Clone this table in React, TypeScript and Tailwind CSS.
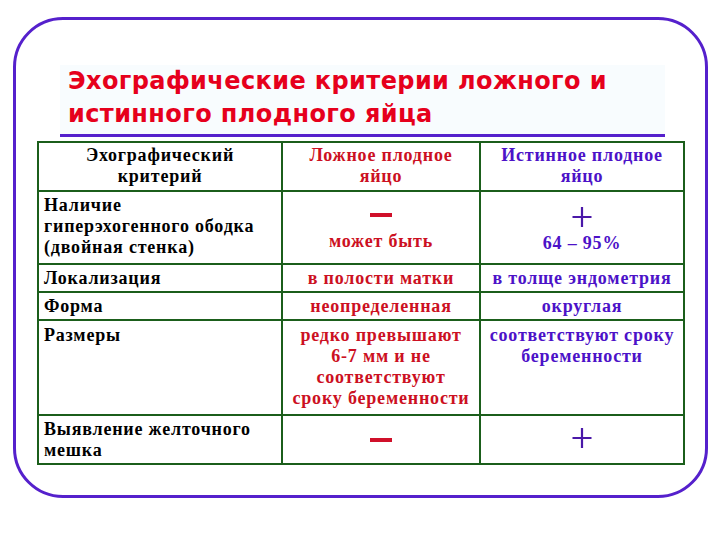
import React from 'react';

function Minus() {
  return <div className="mx-auto h-[4px] w-[22px] bg-[#d0102a]" />;
}

function Plus() {
  return (
    <svg width="22" height="20" viewBox="0 0 22 20" className="mx-auto block">
      <path d="M11 0 V20 M1.5 10 H20.5" stroke="#4a18a8" strokeWidth="2.2" />
    </svg>
  );
}

const cell = 'bg-white px-[5px] whitespace-nowrap';
const plain = `${cell} text-black`;
const red = `${cell} text-[#cc1022] text-center`;
const blue = `${cell} text-[#4c12c8] text-center`;

export default function App() {
  return (
    <div className="w-[720px] h-[540px] bg-white pt-[17px] pl-[13px]">
      <div className="w-[695px] h-[481px] rounded-[50px] border-[3px] border-[#5520cc] flex flex-col">
        <div className="ml-[44px] mt-[45px] w-[605px] border-b-[3px] border-[#5520cc] bg-[#f8fcfe] pl-[8px] pb-[3px] text-[24px] leading-[33px] font-bold tracking-[0.4px] text-[#e6001c] font-['DejaVu_Sans',Verdana,sans-serif]">
          <div>Эхографические критерии ложного и</div>
          <div>истинного плодного яйца</div>
        </div>
        <div className="ml-[21px] mt-[4px] w-[648px] grid grid-cols-[242px_196px_202px] grid-rows-[47px_71px_26px_26px_93px_47px] gap-[2px] p-[2px] bg-[#1b5e1b] font-['Liberation_Serif','Times_New_Roman',serif] text-[18px] leading-[21px] font-bold tracking-[0.8px]">
          <div className={`${plain} text-center pt-[2px]`}>Эхографический<br />критерий</div>
          <div className={`${red} pt-[2px]`}>Ложное плодное<br />яйцо</div>
          <div className={`${blue} pt-[2px]`}>Истинное плодное<br />яйцо</div>

          <div className={`${plain} pt-[3px]`}>
            Наличие<br />гиперэхогенного ободка<br />(двойная стенка)
          </div>
          <div className={`${red} pt-[21px]`}>
            <Minus />
            <div className="mt-[14px]">может быть</div>
          </div>
          <div className={`${blue} pt-[15px]`}>
            <Plus />
            <div className="mt-[6px]">64 – 95%</div>
          </div>

          <div className={`${plain} pt-[3px]`}>Локализация</div>
          <div className={`${red} pt-[3px]`}>в полости матки</div>
          <div className={`${blue} pt-[3px]`}>в толще эндометрия</div>

          <div className={`${plain} pt-[3px]`}>Форма</div>
          <div className={`${red} pt-[3px]`}>неопределенная</div>
          <div className={`${blue} pt-[3px]`}>округлая</div>

          <div className={`${plain} pt-[4px]`}>Размеры</div>
          <div className={`${red} pt-[4px]`}>
            редко превышают<br />6-7 мм и не<br />соответствуют<br />сроку беременности
          </div>
          <div className={`${blue} pt-[4px]`}>
            соответствуют сроку<br />беременности
          </div>

          <div className={`${plain} pt-[3px]`}>Выявление желточного<br />мешка</div>
          <div className={`${red} pt-[22px]`}>
            <Minus />
          </div>
          <div className={`${blue} pt-[12px]`}>
            <Plus />
          </div>
        </div>
      </div>
    </div>
  );
}
